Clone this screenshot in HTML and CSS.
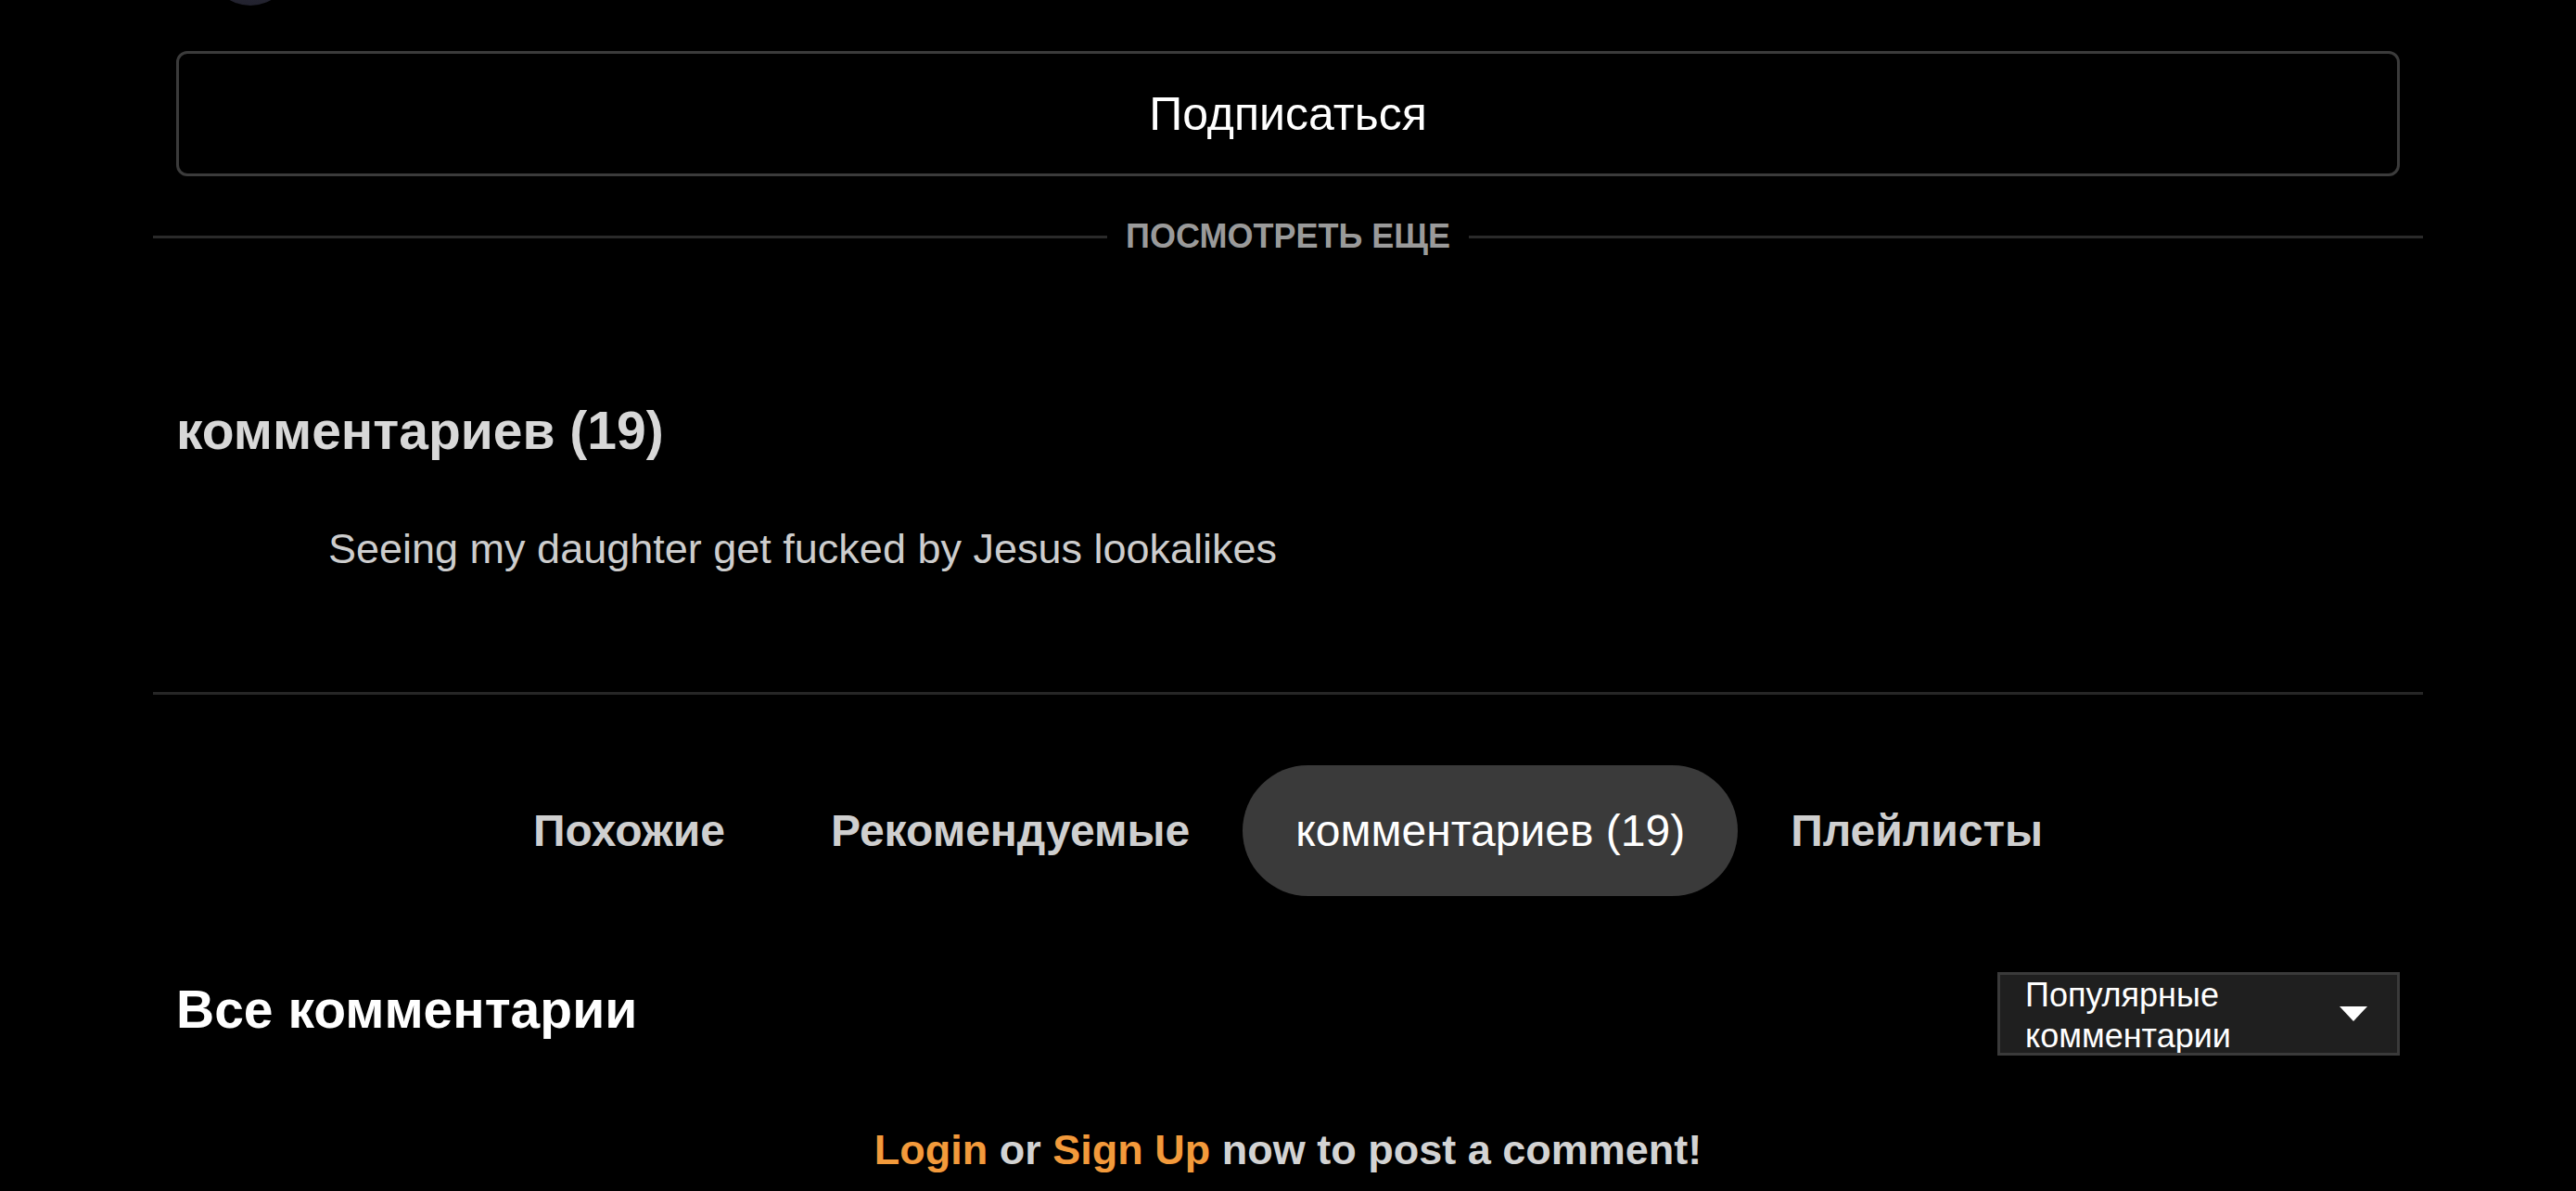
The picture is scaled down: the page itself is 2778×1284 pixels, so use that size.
FILE: index.html
```html
<!DOCTYPE html>
<html lang="ru">

<head>
  <meta charset="UTF-8">
  <meta name="viewport" content="width=device-width, initial-scale=1.0">
  <title>комментариев (19)</title>
  <link rel="stylesheet" href="styles.css">
</head>

<body>
  <div class="pagina">
    <!-- pedaço do avatar do canal, cortado no topo -->
    <div class="canal-avatar"></div>

    <!-- Botão de inscrição -->
    <button class="btn-inscrever">Подписаться</button>

    <!-- Divisor com o link "ver mais" -->
    <div class="ver-mais">
      <span class="linha"></span>
      <span class="ver-mais-texto">ПОСМОТРЕТЬ ЕЩЕ</span>
      <span class="linha"></span>
    </div>

    <h2 class="titulo-comentarios">комментариев (19)</h2>
    <p class="comentario-destaque">Seeing my daughter get fucked by Jesus lookalikes</p>

    <hr class="separador">

    <!-- Abas -->
    <nav class="abas">
      <a class="aba">Похожие</a>
      <a class="aba">Рекомендуемые</a>
      <a class="aba ativa">комментариев (19)</a>
      <a class="aba">Плейлисты</a>
    </nav>

    <div class="comentarios-topo">
      <h3>Все комментарии</h3>
      <div class="ordenar">
        <span class="ordenar-texto">Популярные комментарии</span>
        <svg class="seta" width="30" height="16" viewBox="0 0 30 16">
          <path d="M0 0 H30 L15 16 Z" fill="#fff" />
        </svg>
      </div>
    </div>

    <p class="login-aviso"><a class="laranja">Login</a> or <a class="laranja">Sign Up</a> now to post a comment!</p>
  </div>
</body>

</html>
```

FILE: styles.css
```css
/* Página escura, tudo em Arial (Liberation Sans) */
body {
  margin: 0;
  background-color: #000;
  font-family: "Liberation Sans", Arial, sans-serif;
  color: #fff;
}

.pagina {
  padding: 0 165px;
}

/* só a parte de baixo do avatar aparece */
.canal-avatar {
  width: 90px;
  height: 90px;
  margin-top: -84px;
  margin-left: 60px;
  border-radius: 50%;
  background: radial-gradient(circle at 50% 30%, #3a3a4e, #1c1c26);
}

.btn-inscrever {
  display: block;
  box-sizing: border-box;
  width: calc(100% - 50px);
  height: 135px;
  margin: 49px 25px 0;
  background: #000;
  border: 3px solid #3b3b3b;
  border-radius: 12px;
  color: #fff;
  font-family: inherit;
  font-size: 50px;
}

/* Divisor com texto no meio */
.ver-mais {
  display: flex;
  align-items: center;
  gap: 20px;
  margin-top: 44px;
  height: 42px;
}

.ver-mais .linha {
  flex: 1;
  height: 3px;
  background-color: #2a2a2a;
}

.ver-mais-texto {
  font-size: 36px;
  font-weight: bold;
  color: #9a9a9a;
  line-height: 42px;
}

.titulo-comentarios {
  margin: 155px 25px 0;
  font-size: 57px;
  line-height: 66px;
  color: #d8d8d8;
}

.comentario-destaque {
  margin: 69px 0 0 189px;
  font-size: 45px;
  line-height: 52px;
  color: #cdcdcd;
}

.separador {
  margin: 128px 0 0;
  border: none;
  height: 3px;
  background-color: #262626;
}

/* Abas */
.abas {
  display: flex;
  justify-content: center;
  margin-top: 76px;
}

.aba {
  padding: 42px 57px;
  font-size: 48px;
  line-height: 57px;
  font-weight: bold;
  color: #cfcfcf;
  border-radius: 71px;
}

.aba.ativa {
  background-color: #3a3a3a;
  color: #fff;
  font-weight: normal;
}

/* Título + seletor de ordem */
.comentarios-topo {
  display: flex;
  justify-content: space-between;
  align-items: flex-start;
  margin: 82px 25px 0;
}

.comentarios-topo h3 {
  margin: 8px 0 0;
  font-size: 57px;
  line-height: 64px;
  color: #fff;
}

.ordenar {
  box-sizing: border-box;
  width: 434px;
  height: 90px;
  display: flex;
  align-items: center;
  padding: 4px 32px 0 27px;
  background-color: #1f1f1f;
  border: 3px solid #3a3a3a;
  overflow: hidden;
}

.ordenar-texto {
  flex: 1;
  padding-right: 60px;
  font-size: 36px;
  line-height: 44px;
  color: #fff;
}

.seta {
  flex-shrink: 0;
  margin-top: -4px;
}

.login-aviso {
  margin: 76px 0 0;
  text-align: center;
  font-size: 45px;
  line-height: 52px;
  font-weight: bold;
  color: #d3d3d3;
}

.laranja {
  color: #f39a3b;
}
```
